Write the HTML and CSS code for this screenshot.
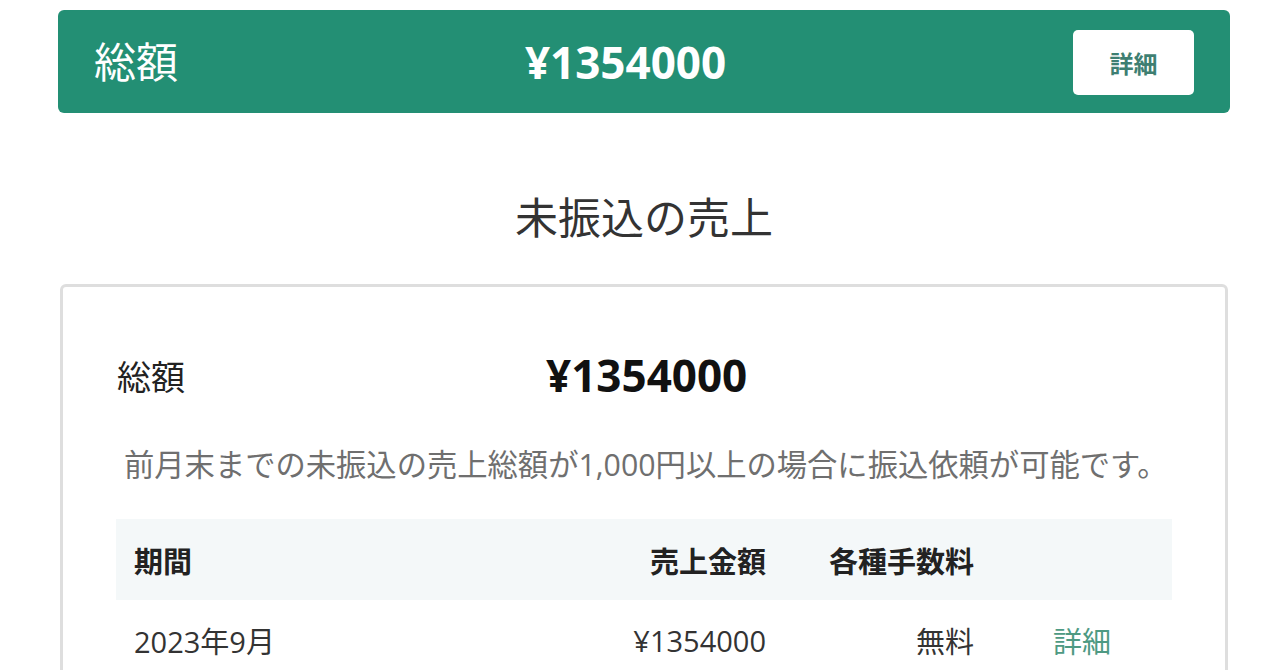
FILE: index.html
```html
<!DOCTYPE html>
<html lang="ja">
<head>
<meta charset="utf-8">
<title>未振込の売上</title>
<link rel="stylesheet" href="styles.css">
</head>
<body>
<div class="page">
  <div class="total-bar">
    <span class="total-bar__label">総額</span>
    <span class="total-bar__amount">¥1354000</span>
    <button class="total-bar__btn">詳細</button>
  </div>

  <h1 class="heading">未振込の売上</h1>

  <div class="card">
    <div class="card__summary">
      <span class="card__label">総額</span>
      <span class="card__amount">¥1354000</span>
    </div>
    <p class="card__note">前月末までの未振込の売上総額が1,000円以上の場合に振込依頼が可能です。</p>
    <div class="table">
      <div class="table__row table__row--head">
        <div class="cell cell--period">期間</div>
        <div class="cell cell--amount">売上金額</div>
        <div class="cell cell--fee">各種手数料</div>
        <div class="cell cell--action"></div>
      </div>
      <div class="table__row">
        <div class="cell cell--period">2023年9月</div>
        <div class="cell cell--amount">¥1354000</div>
        <div class="cell cell--fee">無料</div>
        <div class="cell cell--action"><a class="link" href="#">詳細</a></div>
      </div>
    </div>
  </div>
</div>
</body>
</html>
```

FILE: styles.css
```css
* { box-sizing: border-box; }
html, body { margin: 0; padding: 0; background: #fff; }
body {
  font-family: "Open Sans", "Noto Sans CJK JP", sans-serif;
  color: #222;
  overflow: hidden;
}
.page {
  width: 1172px;
  margin: 0 0 0 58px;
  padding-top: 10px;
}
.total-bar {
  height: 103px;
  background: #238f74;
  border-radius: 6px;
  display: flex;
  align-items: center;
  justify-content: space-between;
  padding: 0 36px;
  color: #fff;
}
.total-bar__label { font-size: 42px; line-height: 1; }
.total-bar__amount { font-size: 44px; font-weight: 700; line-height: 1; }
.total-bar__btn {
  width: 121px;
  height: 65px;
  background: #fff;
  border: none;
  border-radius: 5px;
  font-family: inherit;
  font-size: 24px;
  font-weight: 700;
  color: #3e7f72;
  margin-top: 2px;
}
.heading {
  margin: 0;
  padding-top: 75px;
  height: 171px;
  text-align: center;
  font-size: 43px;
  font-weight: 400;
  color: #333;
  line-height: 60px;
}
.card {
  margin: 0 2px;
  border: 3px solid #dedede;
  border-radius: 6px;
  padding: 58px 53px 0;
  height: 420px;
}
.card__summary {
  display: flex;
  align-items: center;
  height: 60px;
}
.card__label { width: 430px; font-size: 34px; color: #222; padding-left: 1px; }
.card__amount { font-size: 44px; font-weight: 700; color: #111; }
.card__note {
  margin: 0;
  padding: 30px 0 0 8px;
  height: 114px;
  line-height: 60px;
  font-size: 30.3px;
  color: #6f6f6f;
  white-space: nowrap;
}
.table__row {
  display: grid;
  grid-template-columns: 1fr 200px 208px 180px;
  align-items: center;
  height: 80px;
  font-size: 29px;
  color: #333;
}
.table__row--head {
  height: 81px;
  background: #f4f8f9;
  font-weight: 700;
  color: #222;
}
.cell { padding: 0 18px; white-space: nowrap; }
.cell--amount, .cell--fee { text-align: right; }
.cell--action { text-align: center; }
.link { color: #4e9a83; text-decoration: none; }
```
